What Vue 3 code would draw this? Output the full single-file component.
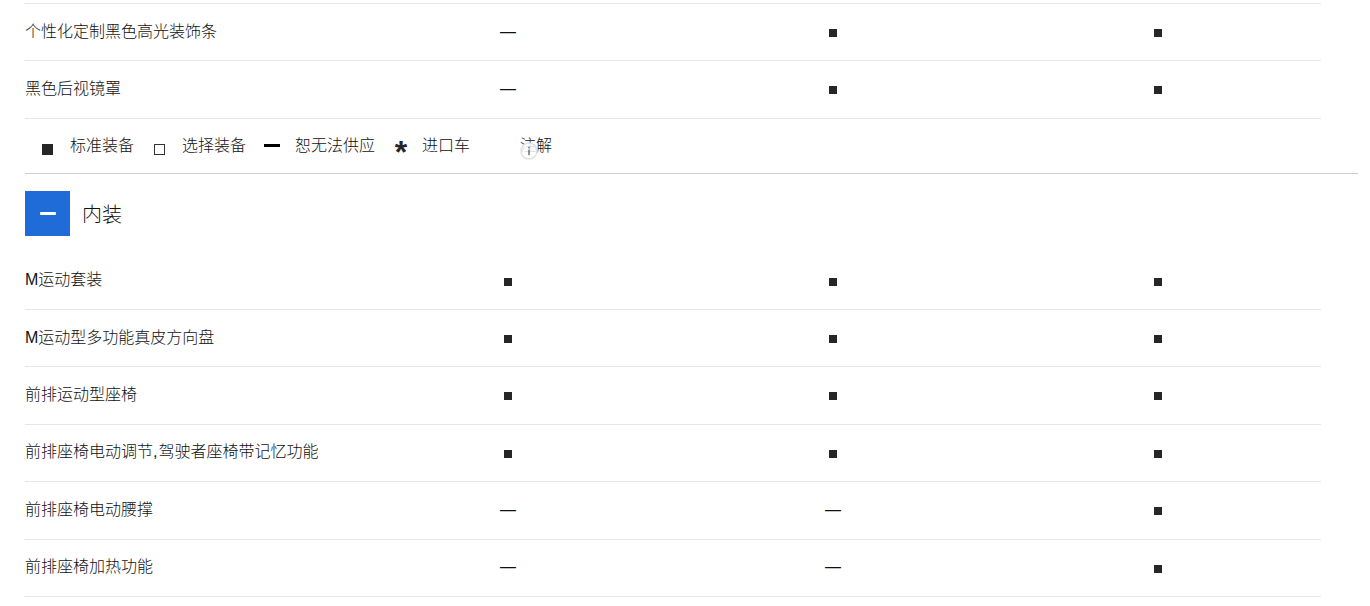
<script setup>
const D = 'dash'
const S = 'square'
const topRows = [
  { name: '个性化定制黑色高光装饰条', cells: [D, S, S] },
  { name: '黑色后视镜罩', cells: [D, S, S] },
]
const interior = [
  { name: 'M运动套装', cells: [S, S, S] },
  { name: 'M运动型多功能真皮方向盘', cells: [S, S, S] },
  { name: '前排运动型座椅', cells: [S, S, S] },
  { name: '前排座椅电动调节, 驾驶者座椅带记忆功能', cells: [S, S, S] },
  { name: '前排座椅电动腰撑', cells: [D, D, S] },
  { name: '前排座椅加热功能', cells: [D, D, S] },
]
</script>

<template>
  <main class="page">
    <section class="rows first">
      <div v-for="row in topRows" :key="row.name" class="row">
        <div class="name">{{ row.name }}</div>
        <div v-for="(c, i) in row.cells" :key="i" class="cell">
          <span v-if="c === 'dash'" class="dash">—</span>
          <span v-else class="sq"></span>
        </div>
      </div>
    </section>

    <section class="legend">
      <span class="lg-sq"></span><span class="lg-t t1">标准装备</span>
      <span class="lg-hollow"></span><span class="lg-t t2">选择装备</span>
      <span class="lg-dash"></span><span class="lg-t t3">恕无法供应</span>
      <span class="lg-star">*</span><span class="lg-t t4">进口车</span>
      <span class="lg-note">
        注解
        <svg class="info" viewBox="0 0 18 18" width="18" height="18" aria-hidden="true">
          <circle cx="9" cy="9" r="8" fill="#fff" fill-opacity="0.85" stroke="#e2e2e2" stroke-width="1.6" />
          <rect x="8.2" y="4.8" width="1.6" height="1.6" fill="#777" />
          <rect x="8.2" y="7.6" width="1.6" height="5.6" fill="#777" />
        </svg>
      </span>
    </section>

    <header class="section-head">
      <span class="toggle"><span class="minus"></span></span>
      <h2>内装</h2>
    </header>

    <section class="rows">
      <div v-for="row in interior" :key="row.name" class="row">
        <div class="name">{{ row.name }}</div>
        <div v-for="(c, i) in row.cells" :key="i" class="cell">
          <span v-if="c === 'dash'" class="dash">—</span>
          <span v-else class="sq"></span>
        </div>
      </div>
    </section>
  </main>
</template>

<style>
html, body { margin: 0; background: #fff; overflow: hidden; }
</style>

<style scoped>
.page {
  width: 1370px;
  height: 606px;
  box-sizing: border-box;
  padding: 3px 12px 0 25px;
  overflow: hidden;
  font-family: "Liberation Sans", "Noto Sans CJK SC", sans-serif;
  font-weight: 300;
  color: #111;
}
.rows { width: 1296px; }
.rows.first { border-top: 1px solid #e6e6e6; }
.row {
  display: grid;
  grid-template-columns: 320px repeat(3, 325px) 1px;
  height: 57.4px;
  box-sizing: border-box;
  border-bottom: 1px solid #e6e6e6;
  align-items: center;
}
.name {
  font-size: 16px;
  line-height: 20px;
  margin-top: -1px;
  word-spacing: -3.5px;
}
.cell { display: flex; justify-content: center; align-items: center; height: 100%; }
.dash {
  font-family: "Liberation Sans", sans-serif;
  font-size: 16px;
  line-height: 20px;
  margin: -1px 0 0 1px;
}
.sq {
  width: 8px;
  height: 8px;
  margin-top: 1.6px;
  background: #262626;
}
.legend {
  display: flex;
  align-items: center;
  height: 55px;
  padding-left: 17px;
  border-bottom: 1px solid #ccc;
  box-sizing: border-box;
  font-size: 16px;
}
.lg-t { line-height: 20px; margin-top: 1px; }
.lg-sq { width: 11px; height: 11px; background: #262626; margin: 8px 17px 0 0; }
.t1 { width: 64px; margin-right: 20px; }
.lg-hollow { width: 9px; height: 9px; border: 1px solid #333; margin: 8px 17px 0 0; }
.t2 { width: 64px; margin-right: 18px; }
.lg-dash { width: 16px; height: 3px; background: #000; margin-right: 15px; }
.t3 { width: 80px; margin-right: 19px; }
.lg-star {
  width: 14px;
  margin: 12px 14px 0 0;
  font-family: "Liberation Sans", sans-serif;
  font-size: 32px;
  font-weight: 700;
  line-height: 20px;
  text-align: center;
  color: #262626;
}
.t4 { width: 48px; margin-right: 50px; }
.lg-note { position: relative; line-height: 20px; margin-top: 1px; }
.info { position: absolute; left: 0; top: 6px; }
.section-head {
  display: flex;
  align-items: center;
  gap: 12px;
  margin-top: 17px;
  margin-bottom: 16.8px;
}
.toggle {
  width: 45px;
  height: 45px;
  display: flex;
  align-items: center;
  justify-content: center;
  background: #1f6bd8;
}
.minus { width: 16px; height: 3px; border-radius: 1px; background: #fff; }
h2 {
  margin: 4px 0 0;
  font-size: 20px;
  font-weight: 300;
  line-height: 28px;
}
</style>
